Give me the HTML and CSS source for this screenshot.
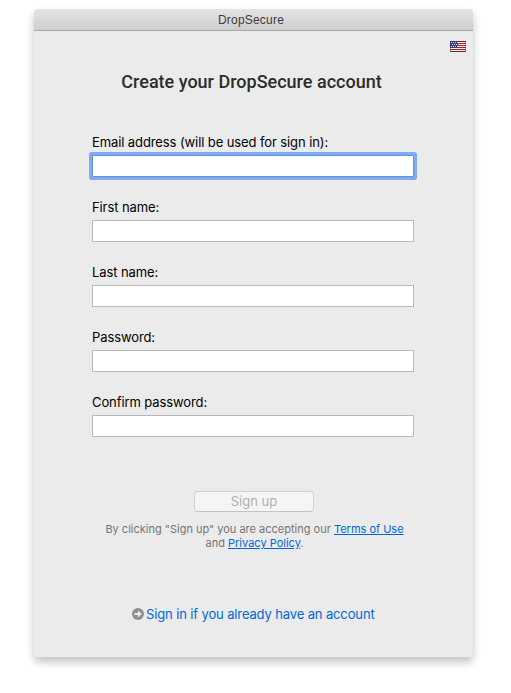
FILE: index.html
```
<!DOCTYPE html>
<html lang="en">
<head>
    <meta charset="UTF-8">
    <title>DropSecure</title>
    <link rel="stylesheet" href="styles.css">
</head>
<body>

<div class="window">
    <div class="titlebar">DropSecure</div>
    <div class="lang">
        <svg class="flag" width="16" height="11" viewBox="0 0 16 11">
            <rect width="16" height="11" fill="#f4eeee"/>
            <path d="M0 .5h16M0 2.5h16M0 4.5h16M0 6.5h16M0 8.5h16M0 10.5h16" stroke="#9c252b"/>
            <rect width="8" height="7" fill="#3b4078"/>
            <path d="M1 1.5h7M2 3.5h6M1 5.5h7" stroke="#d5d7e8" stroke-dasharray="1 1"/>
            <path d="M.5 0v11M15.5 0v11M0 .5h16M0 10.5h16" stroke="#42202d" stroke-opacity=".35"/>
        </svg>
    </div>
    <h1>Create your DropSecure account</h1>

    <form class="form">
        <div class="field">
            <label for="email">Email address (will be used for sign in):</label>
            <input class="focus" type="text" id="email">
        </div>
        <div class="field">
            <label for="first">First name:</label>
            <input type="text" id="first">
        </div>
        <div class="field">
            <label for="last">Last name:</label>
            <input type="text" id="last">
        </div>
        <div class="field">
            <label for="pwd">Password:</label>
            <input type="password" id="pwd">
        </div>
        <div class="field">
            <label for="pwd2">Confirm password:</label>
            <input type="password" id="pwd2">
        </div>
        <button class="btn" type="button" disabled>Sign up</button>
    </form>

    <p class="terms">By clicking "Sign up" you are accepting our <a href="#">Terms of Use</a><br>and <a href="#">Privacy Policy</a>.</p>

    <div class="signin">
        <svg width="12" height="12" viewBox="0 0 12 12">
            <circle cx="6" cy="6" r="6" fill="#8f8f8f"/>
            <path d="M2.5 6h5" stroke="#ececec" stroke-width="2"/>
            <path d="M6 2.6L9.8 6 6 9.4z" fill="#ececec"/>
        </svg>
        <a href="#">Sign in if you already have an account</a>
    </div>
</div>

</body>
</html>
```
FILE: styles.css
```
* {
    margin: 0;
    padding: 0;
    box-sizing: border-box;
}

body {
    height: 693px;
    padding: 9px 0 0 34px;
    background-color: #fff;
    font-family: Inter, "Liberation Sans", sans-serif;
    font-size: 13px;
}

a {
    color: #0068da;
}

.window {
    width: 439px;
    height: 648px;
    background-color: #ebebeb;
    border-radius: 4px;
    box-shadow: 0 5px 9px rgba(0, 0, 0, .24);
}

.titlebar {
    height: 22px;
    border-bottom: 1px solid #a9a9a9;
    border-radius: 4px 4px 0 0;
    background: linear-gradient(#e4e4e4, #cecece);
    color: #3c3c3c;
    font: 12px/22px "Liberation Sans", sans-serif;
    letter-spacing: .2px;
    text-align: center;
    padding-right: 5px;
}

.lang {
    display: flex;
    justify-content: flex-end;
    padding: 10px 7px 0 0;
}

.flag {
    display: block;
}

h1 {
    height: 24px;
    margin-top: 18px;
    padding-right: 4px;
    color: #2c2c2c;
    font: 500 18px/24px Roboto, sans-serif;
    text-align: center;
}

.form {
    width: 322px;
    margin: 39px 0 0 58px;
}

.field {
    height: 65px;
}

.field label {
    display: block;
    height: 22px;
    line-height: 18px;
    color: #000;
    letter-spacing: -.1px;
    white-space: nowrap;
}

.field input {
    display: block;
    width: 322px;
    height: 22px;
    border: 1px solid #b9b9b9;
    background-color: #fff;
    outline: none;
}

.field .focus {
    border-color: #5f93e0;
    box-shadow: 0 0 0 3px #7eabf1;
    outline: 3px solid #7eabf1;
    border-radius: 1px;
}

.btn {
    display: block;
    width: 120px;
    height: 21px;
    margin: 33px 0 0 102px;
    border: 1px solid #d2d2d2;
    border-bottom-color: #c4c4c4;
    border-radius: 4px;
    background-color: #f5f5f5;
    color: #b1b1b1;
    font: 13px/19px Inter, sans-serif;
}

.terms {
    margin-top: 10px;
    padding-left: 2px;
    color: #757575;
    font-size: 11px;
    line-height: 14px;
    text-align: center;
    white-space: nowrap;
}

.signin {
    display: flex;
    align-items: center;
    gap: 2px;
    height: 18px;
    margin: 55px 0 0 98px;
    line-height: 18px;
    letter-spacing: -.13px;
    white-space: nowrap;
}

.signin a {
    text-decoration: none;
}
```
